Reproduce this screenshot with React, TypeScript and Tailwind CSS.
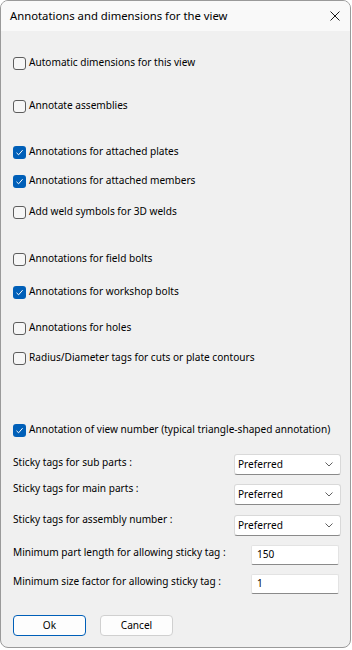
import { useState } from "react";

type Row = { label: string; checked: boolean; gap: string };

const rows: Row[] = [
  { label: "Automatic dimensions for this view", checked: false, gap: "mt-[22px]" },
  { label: "Annotate assemblies", checked: false, gap: "mt-[23px]" },
  { label: "Annotations for attached plates", checked: true, gap: "mt-[26px]" },
  { label: "Annotations for attached members", checked: true, gap: "mt-[9px]" },
  { label: "Add weld symbols for 3D welds", checked: false, gap: "mt-[11px]" },
  { label: "Annotations for field bolts", checked: false, gap: "mt-[27px]" },
  { label: "Annotations for workshop bolts", checked: true, gap: "mt-[13px]" },
  { label: "Annotations for holes", checked: false, gap: "mt-[16px]" },
  { label: "Radius/Diameter tags for cuts or plate contours", checked: false, gap: "mt-[10px]" },
  {
    label: "Annotation of view number (typical triangle-shaped annotation)",
    checked: true,
    gap: "mt-[52px]",
  },
];

function CheckRow({ row }: { row: Row }) {
  const [on, setOn] = useState(row.checked);
  return (
    <div
      className={`${row.gap} shrink-0 flex h-[20px] items-center pl-[12px] cursor-default whitespace-nowrap`}
      onClick={() => setOn(!on)}
    >
      {on ? (
        <div className="w-[13px] h-[13px] rounded-[3px] bg-[#005fb8] flex items-center justify-center">
          <svg width="9" height="9" viewBox="0 0 9 9">
            <path d="M1.5 4.8 L3.6 6.8 L7.6 2.2" stroke="white" strokeWidth="1" fill="none" />
          </svg>
        </div>
      ) : (
        <div className="w-[13px] h-[13px] rounded-[3px] border border-[#5d5d5d] bg-[#f6f6f6]" />
      )}
      <span className="ml-[3px]">{row.label}</span>
    </div>
  );
}

function Chevron() {
  return (
    <svg width="8" height="5" viewBox="0 0 8 5">
      <path d="M0.5 0.5 L4 4 L7.5 0.5" stroke="#606060" strokeWidth="1" fill="none" />
    </svg>
  );
}

function StickyRow({ label, gap, labelTop }: { label: string; gap: string; labelTop: string }) {
  return (
    <div className={`${gap} shrink-0 flex items-start pl-[12px] pr-[9px] whitespace-nowrap`}>
      <span className={`${labelTop} flex-1`}>{label}</span>
      <div className="w-[107px] h-[21px] bg-white border border-[#d9d9d9] border-b-[#8a8a8a] rounded-[3px] flex items-center pl-[3px] pr-[7px]">
        <span className="flex-1">Preferred</span>
        <Chevron />
      </div>
    </div>
  );
}

function InputRow({ label, value, gap }: { label: string; value: string; gap: string }) {
  return (
    <div className={`${gap} shrink-0 flex items-start pl-[12px] pr-[11px] whitespace-nowrap`}>
      <span className="flex-1">{label}</span>
      <div className="w-[88px] h-[20px] bg-white border border-[#e3e3e3] border-b-[#8a8a8a] rounded-[2px] flex items-center pl-[5px]">
        {value}
      </div>
    </div>
  );
}

export default function App() {
  return (
    <div
      className="w-[352px] h-[650px] bg-white text-[10.1px] text-black"
      style={{ fontFamily: '"Noto Sans", sans-serif' }}
    >
      <div className="w-[351px] h-[648px] rounded-[8px] border border-[#9a9a9a] bg-[#f0f0f0] overflow-hidden flex flex-col">
        <div className="h-[30px] bg-[#f9f9f9] flex items-center pl-[9px] pr-[10px] shrink-0">
          <span className="flex-1 text-[11.3px]">Annotations and dimensions for the view</span>
          <svg width="10" height="10" viewBox="0 0 10 10">
            <path d="M0.5 0.5 L9.5 9.5 M9.5 0.5 L0.5 9.5" stroke="#1a1a1a" strokeWidth="1" />
          </svg>
        </div>
        {rows.map((r) => (
          <CheckRow key={r.label} row={r} />
        ))}
        <StickyRow label="Sticky tags for sub parts :" gap="mt-[14px]" labelTop="mt-[1px]" />
        <StickyRow label="Sticky tags for main parts :" gap="mt-[9px]" labelTop="mt-[-3px]" />
        <StickyRow label="Sticky tags for assembly number :" gap="mt-[10px]" labelTop="mt-[-3px]" />
        <InputRow label="Minimum part length for allowing sticky tag :" value="150" gap="mt-[9px]" />
        <InputRow label="Minimum size factor for allowing sticky tag :" value="1" gap="mt-[9px]" />
        <div className="mt-[21px] shrink-0 flex pl-[12px] gap-[14px]">
          <button className="w-[73px] h-[21px] bg-[#fdfdfd] border-[1.5px] border-[#005fb8] rounded-[4px] flex items-center justify-center">
            Ok
          </button>
          <button className="w-[73px] h-[21px] bg-[#fdfdfd] border border-[#d0d0d0] rounded-[4px] flex items-center justify-center">
            Cancel
          </button>
        </div>
      </div>
    </div>
  );
}
